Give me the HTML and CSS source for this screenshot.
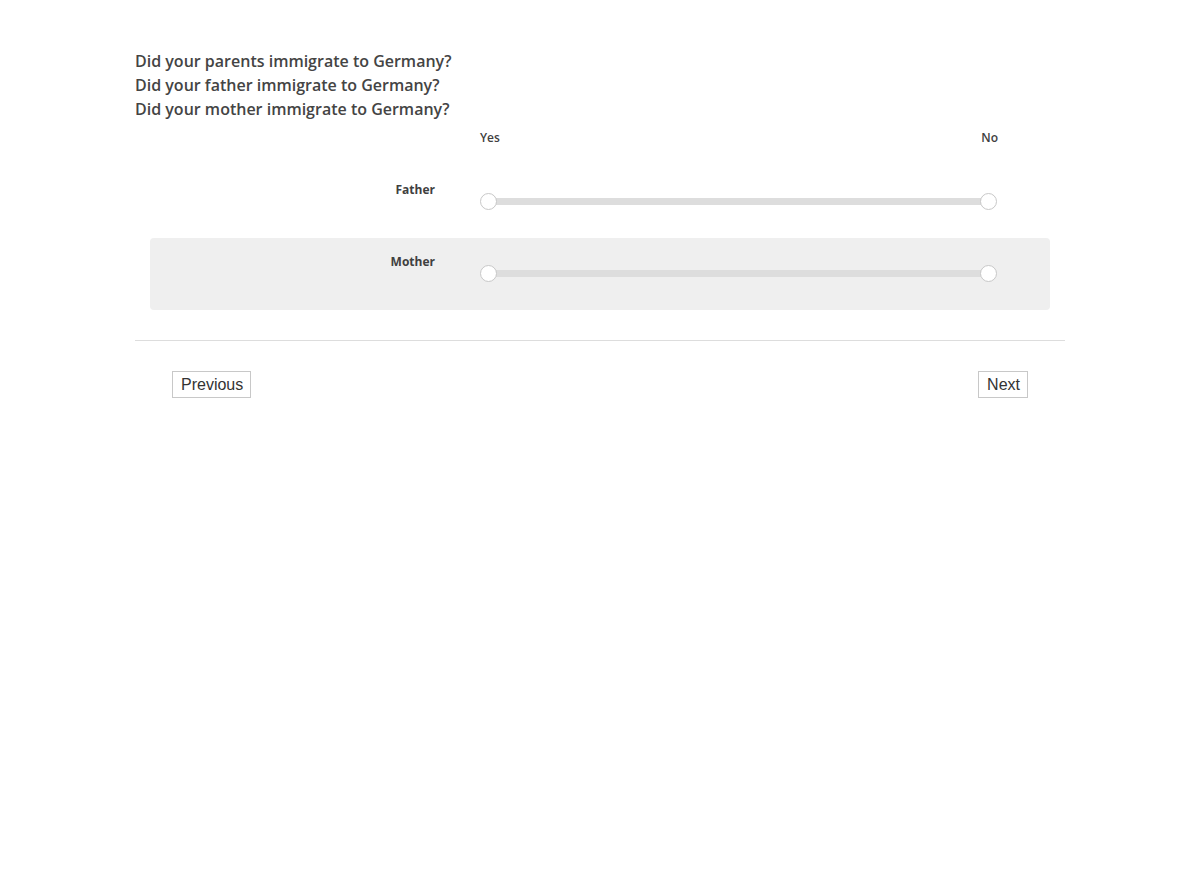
FILE: index.html
```html
<!DOCTYPE html>
<html lang="en">
<head>
    <meta charset="UTF-8">
    <meta name="viewport" content="width=device-width, initial-scale=1.0">
    <title>Survey</title>
    <link rel="stylesheet" href="styles.css">
</head>
<body>
    <div class="page">
        <div class="question">
            <div>Did your parents immigrate to Germany?</div>
            <div>Did your father immigrate to Germany?</div>
            <div>Did your mother immigrate to Germany?</div>
        </div>

        <div class="matrix">
            <div class="matrix-head">
                <div class="row-label"></div>
                <div class="scale-labels">
                    <span>Yes</span>
                    <span>No</span>
                </div>
            </div>

            <div class="matrix-row">
                <div class="row-label">Father</div>
                <div class="slider">
                    <div class="track"></div>
                    <span class="handle handle-left"></span>
                    <span class="handle handle-right"></span>
                </div>
            </div>

            <div class="matrix-row alt">
                <div class="row-label">Mother</div>
                <div class="slider">
                    <div class="track"></div>
                    <span class="handle handle-left"></span>
                    <span class="handle handle-right"></span>
                </div>
            </div>
        </div>

        <hr class="divider">

        <div class="nav">
            <button class="nav-btn">Previous</button>
            <button class="nav-btn">Next</button>
        </div>
    </div>
</body>
</html>
```

FILE: styles.css
```css
body {
    margin: 0;
    background-color: #fff;
    font-family: 'Open Sans', 'Liberation Sans', sans-serif;
    color: #404040;
}

.page {
    width: 930px;
    margin: 0 auto;
    padding-top: 49px;
}

.question {
    font-size: 16px;
    font-weight: 600;
    line-height: 24px;
    color: #444;
}

.matrix {
    margin: 7px 15px 0;
}

.matrix-head,
.matrix-row {
    display: flex;
}

.row-label {
    width: 285px;
    padding-right: 45px;
    text-align: right;
    font-size: 12px;
    font-weight: 700;
    color: #404040;
}

.scale-labels {
    width: 518px;
    display: flex;
    justify-content: space-between;
    font-size: 12px;
    font-weight: 600;
    line-height: 18px;
    height: 37px;
    padding-top: 1px;
    color: #404040;
}

.matrix-row {
    height: 72px;
    border-radius: 4px;
}

.matrix-row .row-label {
    padding-top: 15px;
    line-height: 18px;
}

.matrix-row.alt {
    background-color: #efefef;
}

.slider {
    width: 517px;
    position: relative;
    height: 72px;
}

.track {
    position: absolute;
    left: 8px;
    right: 8px;
    top: 32px;
    height: 7px;
    background-color: #ddd;
}

.handle {
    position: absolute;
    top: 27px;
    width: 15px;
    height: 15px;
    border: 1px solid #c8c8c8;
    border-radius: 50%;
    background-color: #fff;
}

.handle-left {
    left: 0;
}

.handle-right {
    right: 0;
}

.divider {
    border: none;
    border-top: 1px solid #ddd;
    margin: 30px 0 0;
}

.nav {
    display: flex;
    justify-content: space-between;
    padding: 30px 37px 0;
}

.nav-btn {
    font-family: 'Liberation Sans', Arial, sans-serif;
    font-size: 16px;
    line-height: 17px;
    color: #333;
    background-color: #fff;
    border: 1px solid #c8c8c8;
    border-radius: 0;
    padding: 4px 7px 4px 8px;
}
```
